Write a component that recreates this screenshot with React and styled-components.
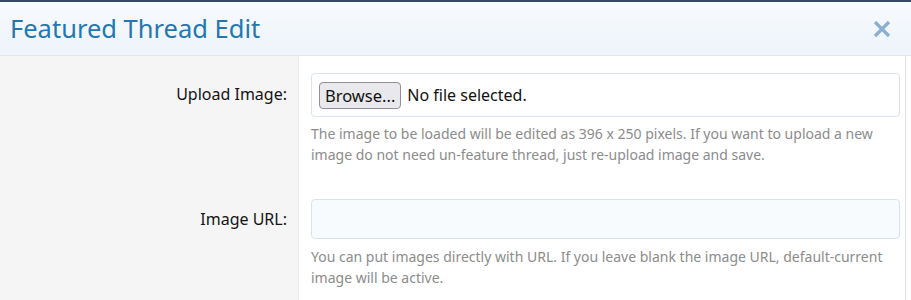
import styled, { createGlobalStyle } from 'styled-components';

const Global = createGlobalStyle`
  html, body { margin: 0; padding: 0; background: #fff; }
  body { font-family: "Noto Sans", "Open Sans", sans-serif; }
`;

const Overlay = styled.div`
  width: 911px;
  height: 300px;
  overflow: hidden;
  border-top: 2px solid #34495e;
  box-sizing: border-box;
  position: relative;
  &::before {
    content: '';
    position: absolute;
    top: -2px;
    left: 0;
    width: 260px;
    height: 2px;
    background: linear-gradient(90deg, #c0392b, #8a6a6a 40%, #34495e);
  }
`;

const Header = styled.div`
  display: flex;
  align-items: center;
  justify-content: space-between;
  height: 53px;
  padding: 0 18px 0 10px;
  background: linear-gradient(#f7fafd, #eef4fa);
  border-bottom: 1px solid #dfe6ec;
`;

const Title = styled.h2`
  margin: 0 0 2px;
  font-size: 25.5px;
  font-weight: 400;
  color: #2577b1;
`;

const Close = styled.button`
  border: 0;
  background: none;
  padding: 0;
  width: 22px;
  height: 22px;
  cursor: pointer;
  display: flex;
  align-items: center;
  justify-content: center;
`;

const Body = styled.div`
  display: flex;
  flex-direction: column;
  border-right: 1px solid #e3e3e3;
  margin-right: 5px;
`;

const Row = styled.div`
  display: grid;
  grid-template-columns: 299px 1fr;
`;

const Label = styled.div`
  background: #f5f5f5;
  border-right: 1px solid #ececec;
  text-align: right;
  padding: ${p => p.top}px 11px 0 0;
  font-size: 16px;
  color: #141414;
`;

const Field = styled.div`
  padding: ${p => p.top}px 5px 13px 12px;
`;

const InputBox = styled.div`
  height: ${p => p.h}px;
  box-sizing: border-box;
  border: 1px solid #d8e4ea;
  border-radius: 4px;
  background: ${p => p.bg};
  display: flex;
  align-items: center;
  padding: 0 7px;
  gap: 6px;
`;

const BrowseButton = styled.span`
  display: inline-flex;
  align-items: center;
  height: 27px;
  padding: 0 5px;
  box-sizing: border-box;
  border: 1px solid #8f8f9d;
  border-radius: 4px;
  background: #e9e9ed;
  font-size: 16.5px;
  color: #111;
`;

const FileName = styled.span`
  font-size: 16px;
  color: #111;
`;

const Explain = styled.p`
  margin: ${p => p.gap}px 0 0;
  font-size: 14px;
  line-height: 21px;
  color: #8c8c8c;
  padding-right: 10px;
`;

export default function App() {
  return (
    <>
      <Global />
      <Overlay>
        <Header>
          <Title>Featured Thread Edit</Title>
          <Close aria-label="Close">
            <svg width="18" height="18" viewBox="0 0 18 18">
              <path d="M2 2 L16 16 M16 2 L2 16" stroke="#8bb0cf" strokeWidth="3.2" strokeLinecap="butt" />
            </svg>
          </Close>
        </Header>
        <Body>
          <Row>
            <Label top={27}>Upload Image:</Label>
            <Field top={17}>
              <InputBox h={44} bg="#fff">
                <BrowseButton>Browse...</BrowseButton>
                <FileName>No file selected.</FileName>
              </InputBox>
              <Explain gap={6}>
                The image to be loaded will be edited as 396 x 250 pixels. If you want to upload a new
                image do not need un-feature thread, just re-upload image and save.
              </Explain>
            </Field>
          </Row>
          <Row>
            <Label top={30}>Image URL:</Label>
            <Field top={21}>
              <InputBox h={40} bg="#f8fbfd" />
              <Explain gap={7}>
                You can put images directly with URL. If you leave blank the image URL, default-current
                image will be active.
              </Explain>
            </Field>
          </Row>
        </Body>
      </Overlay>
    </>
  );
}
